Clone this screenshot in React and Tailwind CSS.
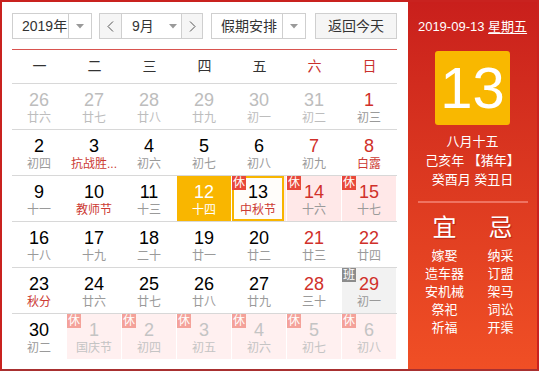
import { useState } from "react";

const weekdays = ["一", "二", "三", "四", "五", "六", "日"];

// t: p = prev month, n = next month, h = 休, w = 班, s = selected, today
const rows = [
  [
    { d: 26, l: "廿六", t: "p" },
    { d: 27, l: "廿七", t: "p" },
    { d: 28, l: "廿八", t: "p" },
    { d: 29, l: "廿九", t: "p" },
    { d: 30, l: "初一", t: "p" },
    { d: 31, l: "初二", t: "p" },
    { d: 1, l: "初三", red: true },
  ],
  [
    { d: 2, l: "初四" },
    { d: 3, l: "抗战胜...", fest: true },
    { d: 4, l: "初六" },
    { d: 5, l: "初七" },
    { d: 6, l: "初八" },
    { d: 7, l: "初九", red: true },
    { d: 8, l: "白露", red: true, fest: true },
  ],
  [
    { d: 9, l: "十一" },
    { d: 10, l: "教师节", fest: true },
    { d: 11, l: "十三" },
    { d: 12, l: "十四", t: "s" },
    { d: 13, l: "中秋节", t: "today", fest: true },
    { d: 14, l: "十六", t: "h", red: true },
    { d: 15, l: "十七", t: "h", red: true },
  ],
  [
    { d: 16, l: "十八" },
    { d: 17, l: "十九" },
    { d: 18, l: "二十" },
    { d: 19, l: "廿一" },
    { d: 20, l: "廿二" },
    { d: 21, l: "廿三", red: true },
    { d: 22, l: "廿四", red: true },
  ],
  [
    { d: 23, l: "秋分", fest: true },
    { d: 24, l: "廿六" },
    { d: 25, l: "廿七" },
    { d: 26, l: "廿八" },
    { d: 27, l: "廿九" },
    { d: 28, l: "三十", red: true },
    { d: 29, l: "初一", t: "w", red: true },
  ],
  [
    { d: 30, l: "初二" },
    { d: 1, l: "国庆节", t: "n" },
    { d: 2, l: "初四", t: "n" },
    { d: 3, l: "初五", t: "n" },
    { d: 4, l: "初六", t: "n" },
    { d: 5, l: "初七", t: "n" },
    { d: 6, l: "初八", t: "n" },
  ],
];

const yi = ["嫁娶", "造车器", "安机械", "祭祀", "祈福"];
const ji = ["纳采", "订盟", "架马", "词讼", "开渠"];

function Caret() {
  return (
    <svg width="8" height="5" viewBox="0 0 8 5">
      <polygon points="0,0 8,0 4,4.5" fill="#9a9a9a" />
    </svg>
  );
}

function Chevron({ right }) {
  return (
    <svg width="7" height="11" viewBox="0 0 7 11">
      <polyline
        points={right ? "1,0.5 6,5.5 1,10.5" : "6,0.5 1,5.5 6,10.5"}
        fill="none"
        stroke="#555"
        strokeWidth="1"
      />
    </svg>
  );
}

function Cell({ c }) {
  let bg = "";
  let num = "text-black";
  let lunar = "text-[#9a9a9a]";
  let tag = null;

  if (c.red) num = "text-[#d0302a]";
  if (c.fest) lunar = "text-[#cc3a33]";
  if (c.t === "p") {
    num = "text-[#bdbdbd]";
    lunar = "text-[#bdbdbd]";
  }
  if (c.t === "n") {
    bg = "bg-[#fff0f0]";
    num = "text-[#c4c4c4]";
    lunar = "text-[#c4c4c4]";
    tag = <span className="absolute left-0 top-0 w-[14px] h-[14px] bg-[#f4a29a] text-white text-[12px] leading-[14px] text-center">休</span>;
  }
  if (c.t === "h") {
    bg = "bg-[#ffe8e8]";
    tag = <span className="absolute left-0 top-0 w-[14px] h-[14px] bg-[#e8483a] text-white text-[12px] leading-[14px] text-center">休</span>;
  }
  if (c.t === "w") {
    bg = "bg-[#f2f2f2]";
    tag = <span className="absolute left-0 top-0 w-[14px] h-[14px] bg-[#8c8c8c] text-white text-[12px] leading-[14px] text-center">班</span>;
  }
  if (c.t === "s") {
    bg = "bg-[#f9b600]";
    num = "text-white";
    lunar = "text-white";
  }

  if (c.t === "today") {
    return (
      <div className="w-[55px] h-[45px] pr-px">
        <div className="relative h-full bg-[#ffe8e8]">
          <div className="h-full mr-[2px] border-2 border-[#f8b500] bg-[#fffdfa] flex flex-col items-center pt-[4px]">
            <div className={"text-[18px] leading-[20px] " + num}>{c.d}</div>
            <div className={"text-[12px] leading-[16px] " + lunar}>{c.l}</div>
          </div>
          <span className="absolute left-0 top-0 w-[14px] h-[14px] bg-[#e8483a] text-white text-[12px] leading-[14px] text-center">休</span>
        </div>
      </div>
    );
  }

  return (
    <div className="w-[55px] h-[45px] pr-px">
      <div className={"relative h-full flex flex-col items-center pt-[6px] " + bg}>
        <div className={"text-[18px] leading-[20px] " + num}>{c.d}</div>
        <div className={"text-[12px] leading-[16px] whitespace-nowrap " + lunar}>{c.l}</div>
        {tag}
      </div>
    </div>
  );
}

export default function App() {
  const [month] = useState("9月");

  return (
    <div className="w-[539px] h-[371px] border-2 border-[#c9221f] border-b-[#a83030] flex bg-white font-['Liberation_Sans','Noto_Sans_CJK_SC',sans-serif]">
      <div className="w-[406px] pl-[10px] pt-[11px]">
        <div className="flex items-center h-[26px] text-[14px] text-[#333]">
          <div className="w-[80px] h-full border border-[#cfcfcf] flex">
            <div className="w-[55px] pl-[9px] leading-[24px]">2019年</div>
            <div className="flex-1 border-l border-[#cfcfcf] flex items-center justify-center">
              <Caret />
            </div>
          </div>
          <div className="ml-[7px] w-[104px] h-full border border-[#cfcfcf] flex">
            <div className="w-[22px] bg-[#f5f5f5] border-r border-[#cfcfcf] flex items-center justify-center">
              <Chevron />
            </div>
            <div className="w-[59px] flex items-center pl-[10px]">
              <span className="leading-[24px]">{month}</span>
              <span className="ml-[15px] flex">
                <Caret />
              </span>
            </div>
            <div className="flex-1 bg-[#f5f5f5] border-l border-[#cfcfcf] flex items-center justify-center">
              <Chevron right />
            </div>
          </div>
          <div className="ml-[8px] w-[95px] h-full border border-[#cfcfcf] flex">
            <div className="w-[70px] pl-[9px] leading-[24px]">假期安排</div>
            <div className="flex-1 border-l border-[#cfcfcf] flex items-center justify-center">
              <Caret />
            </div>
          </div>
          <div className="ml-[9px] w-[82px] h-full border border-[#cfcfcf] bg-[#f5f5f5] text-center leading-[24px]">
            返回今天
          </div>
        </div>

        <div className="mt-[10px] w-[385px] h-px bg-[#d9534f]" />

        <div className="w-[385px] h-[33px] flex items-center text-[14px]">
          {weekdays.map((w, i) => (
            <div key={w} className={"w-[55px] text-center " + (i > 4 ? "text-[#c9302c]" : "text-[#333]")}>
              {w}
            </div>
          ))}
        </div>

        <div className="w-[385px]">
          {rows.map((r, i) => (
            <div key={i} className="flex border-t border-[#d8d8d8]">
              {r.map((c, j) => (
                <Cell key={j} c={c} />
              ))}
            </div>
          ))}
        </div>
      </div>

      <div className="w-[129px] h-full bg-linear-to-b from-[#c91f1c] to-[#f04f25] flex flex-col items-center text-white">
        <div className="mt-[15px] text-[13px] leading-[20px] whitespace-nowrap">
          2019-09-13 <span className="underline underline-offset-2">星期五</span>
        </div>
        <div className="mt-[14px] w-[75px] h-[74px] rounded-[3px] bg-[#f9b800] flex items-center justify-center text-[58px] leading-none">
          13
        </div>
        <div className="mt-[7px] text-[13px] leading-[19px] text-center">
          <div>八月十五</div>
          <div>己亥年 【猪年】</div>
          <div>癸酉月 癸丑日</div>
        </div>
        <div className="mt-[12px] w-[110px] h-[2px] bg-[#ef7361]" />
        <div className="mt-[10px] w-[112px] grid grid-cols-2 text-center">
          <div className="text-[24px] leading-[30px] [text-shadow:1px_1px_1px_rgba(120,0,0,0.4)]">宜</div>
          <div className="text-[24px] leading-[30px] [text-shadow:1px_1px_1px_rgba(120,0,0,0.4)]">忌</div>
          <div className="mt-[4px] text-[13px] leading-[18px]">
            {yi.map((t) => (
              <div key={t}>{t}</div>
            ))}
          </div>
          <div className="mt-[4px] text-[13px] leading-[18px]">
            {ji.map((t) => (
              <div key={t}>{t}</div>
            ))}
          </div>
        </div>
      </div>
    </div>
  );
}
